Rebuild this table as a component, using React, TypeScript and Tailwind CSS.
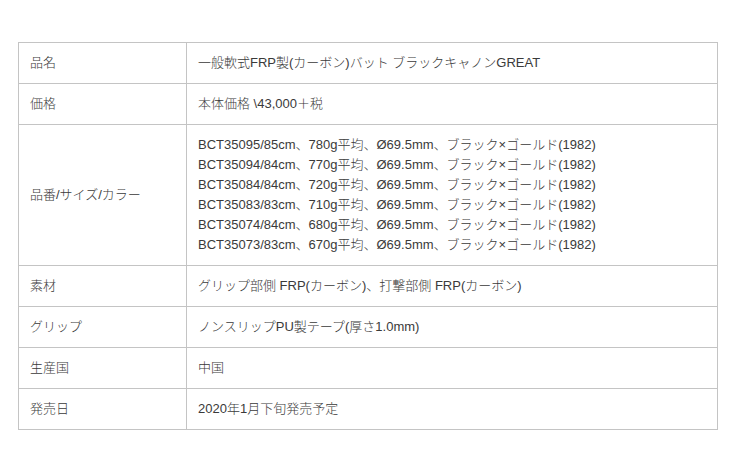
import React from "react";

const specs = [
  "BCT35095/85cm、780g平均、Ø69.5mm、ブラック×ゴールド(1982)",
  "BCT35094/84cm、770g平均、Ø69.5mm、ブラック×ゴールド(1982)",
  "BCT35084/84cm、720g平均、Ø69.5mm、ブラック×ゴールド(1982)",
  "BCT35083/83cm、710g平均、Ø69.5mm、ブラック×ゴールド(1982)",
  "BCT35074/84cm、680g平均、Ø69.5mm、ブラック×ゴールド(1982)",
  "BCT35073/83cm、670g平均、Ø69.5mm、ブラック×ゴールド(1982)",
];

const rows: { label: string; value: React.ReactNode }[] = [
  { label: "品名", value: "一般軟式FRP製(カーボン)バット ブラックキャノンGREAT" },
  { label: "価格", value: "本体価格 \\43,000＋税" },
  {
    label: "品番/サイズ/カラー",
    value: specs.map((s) => <div key={s}>{s}</div>),
  },
  { label: "素材", value: "グリップ部側 FRP(カーボン)、打撃部側 FRP(カーボン)" },
  { label: "グリップ", value: "ノンスリップPU製テープ(厚さ1.0mm)" },
  { label: "生産国", value: "中国" },
  { label: "発売日", value: "2020年1月下旬発売予定" },
];

export default function App() {
  return (
    <div
      className="w-[740px] h-[470px] bg-white pt-[42px] pl-[18px] text-[13px] leading-[20px] text-[#3a3a3a] font-light"
      style={{ fontFamily: '"Liberation Sans", "Noto Sans CJK JP", sans-serif' }}
    >
      <table className="w-[700px] border-collapse">
        <tbody>
          {rows.map((r) => (
            <tr key={r.label}>
              <td className="w-[168px] border border-[#c4c4c4] px-[11px] py-[10px] align-middle">
                {r.label}
              </td>
              <td className="border border-[#c4c4c4] px-[11px] py-[10px] align-middle">
                {r.value}
              </td>
            </tr>
          ))}
        </tbody>
      </table>
    </div>
  );
}
